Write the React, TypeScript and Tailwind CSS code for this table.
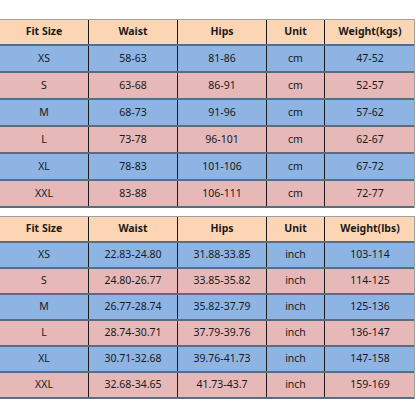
import React from "react";

const t1 = {
  head: ["Fit Size", "Waist", "Hips", "Unit", "Weight(kgs)"],
  rows: [
    ["XS", "58-63", "81-86", "cm", "47-52"],
    ["S", "63-68", "86-91", "cm", "52-57"],
    ["M", "68-73", "91-96", "cm", "57-62"],
    ["L", "73-78", "96-101", "cm", "62-67"],
    ["XL", "78-83", "101-106", "cm", "67-72"],
    ["XXL", "83-88", "106-111", "cm", "72-77"],
  ],
};
const t2 = {
  head: ["Fit Size", "Waist", "Hips", "Unit", "Weight(lbs)"],
  rows: [
    ["XS", "22.83-24.80", "31.88-33.85", "inch", "103-114"],
    ["S", "24.80-26.77", "33.85-35.82", "inch", "114-125"],
    ["M", "26.77-28.74", "35.82-37.79", "inch", "125-136"],
    ["L", "28.74-30.71", "37.79-39.76", "inch", "136-147"],
    ["XL", "30.71-32.68", "39.76-41.73", "inch", "147-158"],
    ["XXL", "32.68-34.65", "41.73-43.7", "inch", "159-169"],
  ],
};

function Table({ data, rowH, headH }: { data: typeof t1; rowH: string; headH: string }) {
  return (
    <div className="border-r border-t border-[#a0a0a0] w-[415px]">
      <div className={`grid grid-cols-[89px_89px_89px_58px_90px] bg-[#fcd5b4] border-b-2 border-[#5d6a80] ${headH}`}>
        {data.head.map((h, i) => (
          <div key={i} className={`flex items-center justify-center font-bold ${i < 4 ? "border-r border-[#1a1a1a]" : ""}`}>
            {h}
          </div>
        ))}
      </div>
      {data.rows.map((r, ri) => (
        <div
          key={ri}
          className={`grid grid-cols-[89px_89px_89px_58px_90px] border-b-2 border-[#5d6a80] ${rowH} ${ri % 2 === 0 ? "bg-[#8db4e2]" : "bg-[#e6b8b7]"}`}
        >
          {r.map((c, i) => (
            <div key={i} className={`flex items-center justify-center ${i < 4 ? "border-r border-[#1a1a1a]" : ""}`}>
              {c}
            </div>
          ))}
        </div>
      ))}
    </div>
  );
}

export default function App() {
  return (
    <div
      className="w-[416px] h-[416px] bg-white pt-[19px] flex flex-col gap-[8px] text-[10.5px] text-[#1a1a1a]"
      style={{ fontFamily: '"Noto Sans", "Open Sans", sans-serif' }}
    >
      <Table data={t1} headH="h-[26px]" rowH="h-[27px]" />
      <Table data={t2} headH="h-[26px]" rowH="h-[26px]" />
    </div>
  );
}
